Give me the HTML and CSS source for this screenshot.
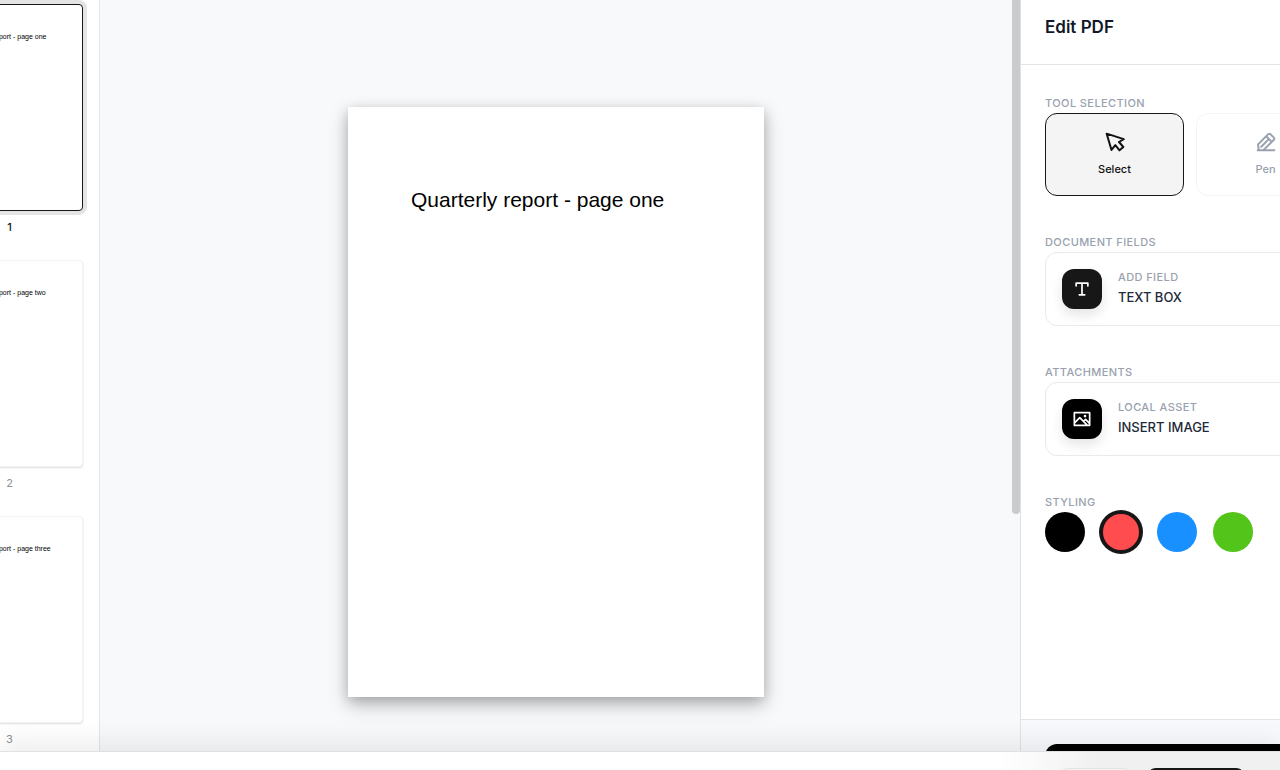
FILE: index.html
```html
<!DOCTYPE html>
<html lang="en">
<head>
<meta charset="utf-8">
<title>Edit PDF</title>
<link rel="stylesheet" href="styles.css">
</head>
<body>
<div class="app">
  <div class="workspace">
    <nav class="thumbs" aria-label="Pages">
      <div class="thumb-list">
        <div class="thumb-item current"><button class="thumb" type="button">Quarterly report - page one</button><span class="thumb-number">1</span></div>
        <div class="thumb-item"><button class="thumb" type="button">Quarterly report - page two</button><span class="thumb-number">2</span></div>
        <div class="thumb-item"><button class="thumb" type="button">Quarterly report - page three</button><span class="thumb-number">3</span></div>
      </div>
    </nav>
    <main class="canvas">
      <div class="stage"><article class="page">Quarterly report - page one</article></div>
      <div class="scrollbar"><div class="scroll-handle"></div></div>
    </main>
    <aside class="panel-frame">
      <div class="panel">
        <header class="panel-header"><h1 class="panel-title">Edit PDF</h1></header>
        <div class="panel-body">
          <section>
            <h2 class="label">TOOL SELECTION</h2>
            <div class="tools">
              <button class="tool selected" type="button">
                <svg class="tool-icon" viewBox="0 0 24 24"><path d="M2 2 7.8 21.5 12.4 15.8 17.4 22 22 18 16.8 12 22.5 8.6Z"/></svg>
                <span>Select</span>
              </button>
              <button class="tool" type="button">
                <svg class="tool-icon" viewBox="0 0 24 24"><path d="M2 22h20M3.2 21.4 2.5 14.8 14.7 2.6Q16 1.5 17.3 2.6L21.4 6.7Q22.5 8 21.4 9.3L9.5 21.2Q6 22.5 3.2 21.4M12.2 5.1l6.7 6.7M6.3 17.7l8.5-8.5"/></svg>
                <span>Pen</span>
              </button>
            </div>
          </section>
          <section>
            <h2 class="label">DOCUMENT FIELDS</h2>
            <button class="card" type="button">
              <span class="badge"><svg class="badge-icon" viewBox="0 0 20 20"><path d="M3.5 6.5V3.5h13v3M10 3.5v13M7 16.5h6"/></svg></span>
              <span class="card-text"><span class="card-kicker">ADD FIELD</span><span class="card-title">TEXT BOX</span></span>
            </button>
          </section>
          <section>
            <h2 class="label">ATTACHMENTS</h2>
            <button class="card" type="button">
              <span class="badge black"><svg class="badge-icon" viewBox="0 0 20 20"><path d="M1.5 3h17v14h-17ZM2 14l5.5-5.5L15.5 16.5M12 12.5l2-2 4 4"/><circle class="dot" cx="13.4" cy="6.8" r="1.5"/></svg></span>
              <span class="card-text"><span class="card-kicker">LOCAL ASSET</span><span class="card-title">INSERT IMAGE</span></span>
            </button>
          </section>
          <section>
            <h2 class="label">STYLING</h2>
            <div class="swatches">
              <button class="swatch ink" type="button" aria-label="Black"></button>
              <button class="swatch red chosen" type="button" aria-label="Red"></button>
              <button class="swatch blue" type="button" aria-label="Blue"></button>
              <button class="swatch green" type="button" aria-label="Green"></button>
            </div>
          </section>
        </div>
        <footer class="panel-footer"><button class="save" type="button" aria-label="Save"></button></footer>
      </div>
    </aside>
  </div>
  <div class="bottom-bar">
    <button class="bar-button" type="button" aria-label="Cancel"></button>
    <button class="bar-button primary" type="button" aria-label="Apply"></button>
  </div>
</div>
</body>
</html>
```
FILE: styles.css
```css
* { box-sizing: border-box; }
body { margin: 0; font-family: Inter, "Liberation Sans", sans-serif; color: #111827; background: #fff; }
button { font: inherit; color: inherit; margin: 0; padding: 0; cursor: pointer; }
svg { display: block; fill: none; stroke: currentColor; stroke-linecap: round; stroke-linejoin: round; }

.app { height: 100vh; display: flex; flex-direction: column; overflow: hidden; }
.workspace { flex: 1; min-height: 0; display: flex; }

/* Page thumbnails */
.thumbs { flex: 0 0 100px; display: flex; justify-content: flex-end; overflow: hidden; padding: 4px 16px 0 0; border-right: 1px solid #e2e4e8; }
.thumb-list { flex: none; width: 147px; display: flex; flex-direction: column; gap: 25px; }
.thumb-item { display: flex; flex-direction: column; gap: 8px; }
.thumb { width: 100%; height: 207px; padding: 27px 0 0 25px; display: flex; align-items: flex-start; border: 1px solid #f3f3f4; border-radius: 4px; background: #fff; box-shadow: 0 1px 2px #0002; font: 7px/10px "Liberation Sans", sans-serif; color: #000; text-align: left; white-space: nowrap; }
.current .thumb { border-color: #171717; box-shadow: 0 0 0 4px #e4e4e4; }
.thumb-number { font-size: 11px; line-height: 16px; text-align: center; color: #8c8f94; }
.current .thumb-number { color: #171717; font-weight: 500; }

/* Document canvas */
.canvas { flex: 1; min-width: 0; display: flex; background: #f7f9fb; }
.stage { flex: 1; padding-top: 107px; display: flex; justify-content: center; align-items: flex-start; }
.page { width: 416px; height: 590px; padding: 80px 63px; background: #fff; box-shadow: 0 8px 20px #0003, 0 4px 12px #0003; font: 21px/26px "Liberation Sans", sans-serif; color: #000; white-space: nowrap; }
.scrollbar { width: 8px; }
.scroll-handle { height: 68.4%; background: #c9cbcd; border-radius: 0 0 4px 4px; }

/* Editing panel */
.panel-frame { flex: 0 0 260px; overflow: hidden; border-left: 1px solid #dfe1e5; }
.panel { width: 338px; height: 100%; display: flex; flex-direction: column; }
.panel-header { padding: 13px 24px 23px; border-bottom: 1px solid #e2e4e8; }
.panel-title { margin: 0; font-size: 17px; line-height: 28px; font-weight: 600; }
.panel-body { flex: 1; min-height: 0; padding: 28px 24px 0; display: flex; flex-direction: column; gap: 36px; }
.label { margin: 0; font-size: 11px; line-height: 20px; font-weight: 500; letter-spacing: 0.4px; color: #99a1af; }
.tools { display: grid; grid-template-columns: 1fr 1fr; gap: 12px; }
.tool { height: 83px; display: flex; flex-direction: column; align-items: center; justify-content: center; gap: 9px; border: 1px solid #f3f4f6; border-radius: 12px; background: #fff; color: #99a1af; font-size: 11px; line-height: 16px; font-weight: 500; }
.tool.selected { border-color: #171717; background: #f4f4f4; color: #111; }
.tool-icon { width: 20px; height: 20px; stroke-width: 2.4; }
.card { width: 100%; padding: 16px; display: flex; align-items: center; gap: 16px; border: 1px solid #e8e9eb; border-radius: 12px; background: #fff; text-align: left; }
.badge { width: 40px; height: 40px; display: grid; place-items: center; border-radius: 12px; background: #171717; color: #fff; box-shadow: 0 6px 12px #0000001a; }
.badge.black { background: #000; }
.badge-icon { width: 18px; height: 18px; stroke-width: 1.9; }
.dot { fill: currentColor; stroke: none; }
.card-text { align-self: flex-start; display: flex; flex-direction: column; gap: 2px; }
.card-kicker { font-size: 11px; line-height: 16px; font-weight: 500; letter-spacing: 0.4px; color: #99a1af; }
.card-title { font-size: 13px; line-height: 20px; font-weight: 500; color: #1e2939; }
.swatches { display: flex; gap: 16px; }
.swatch { width: 40px; height: 40px; border: 0; border-radius: 50%; }
.ink { background: #000; }
.red { background: #ff4d4f; }
.blue { background: #1890ff; }
.green { background: #52c41a; }
.chosen { border: 2px solid #171717; box-shadow: 0 0 0 2px #171717; }
.panel-footer { height: 32px; padding: 24px 24px 0; overflow: hidden; border-top: 1px solid #e2e4e8; background: #f7f9fc; }
.save { width: 100%; height: 48px; border: 0; border-radius: 12px; background: #000; }

/* Bottom actions, drawn above the workspace shadow */
.bottom-bar { position: relative; flex: 0 0 19px; min-height: 0; height: 19px; overflow: hidden; display: flex; align-items: flex-start; justify-content: flex-end; gap: 12px; padding: 0 34px; border-top: 1px solid #dfe1e3; background: linear-gradient(to right, #fff calc(100% - 280px), #f0f0f0 calc(100% - 180px)); box-shadow: 0 -4px 30px #0000001f; }
.bar-button { flex: none; width: 76px; height: 36px; margin-top: 16px; border: 1px solid #e3e3e3; border-radius: 10px; background: #f3f3f3; }
.bar-button.primary { width: 100px; border-color: #171717; background: #171717; }
```
